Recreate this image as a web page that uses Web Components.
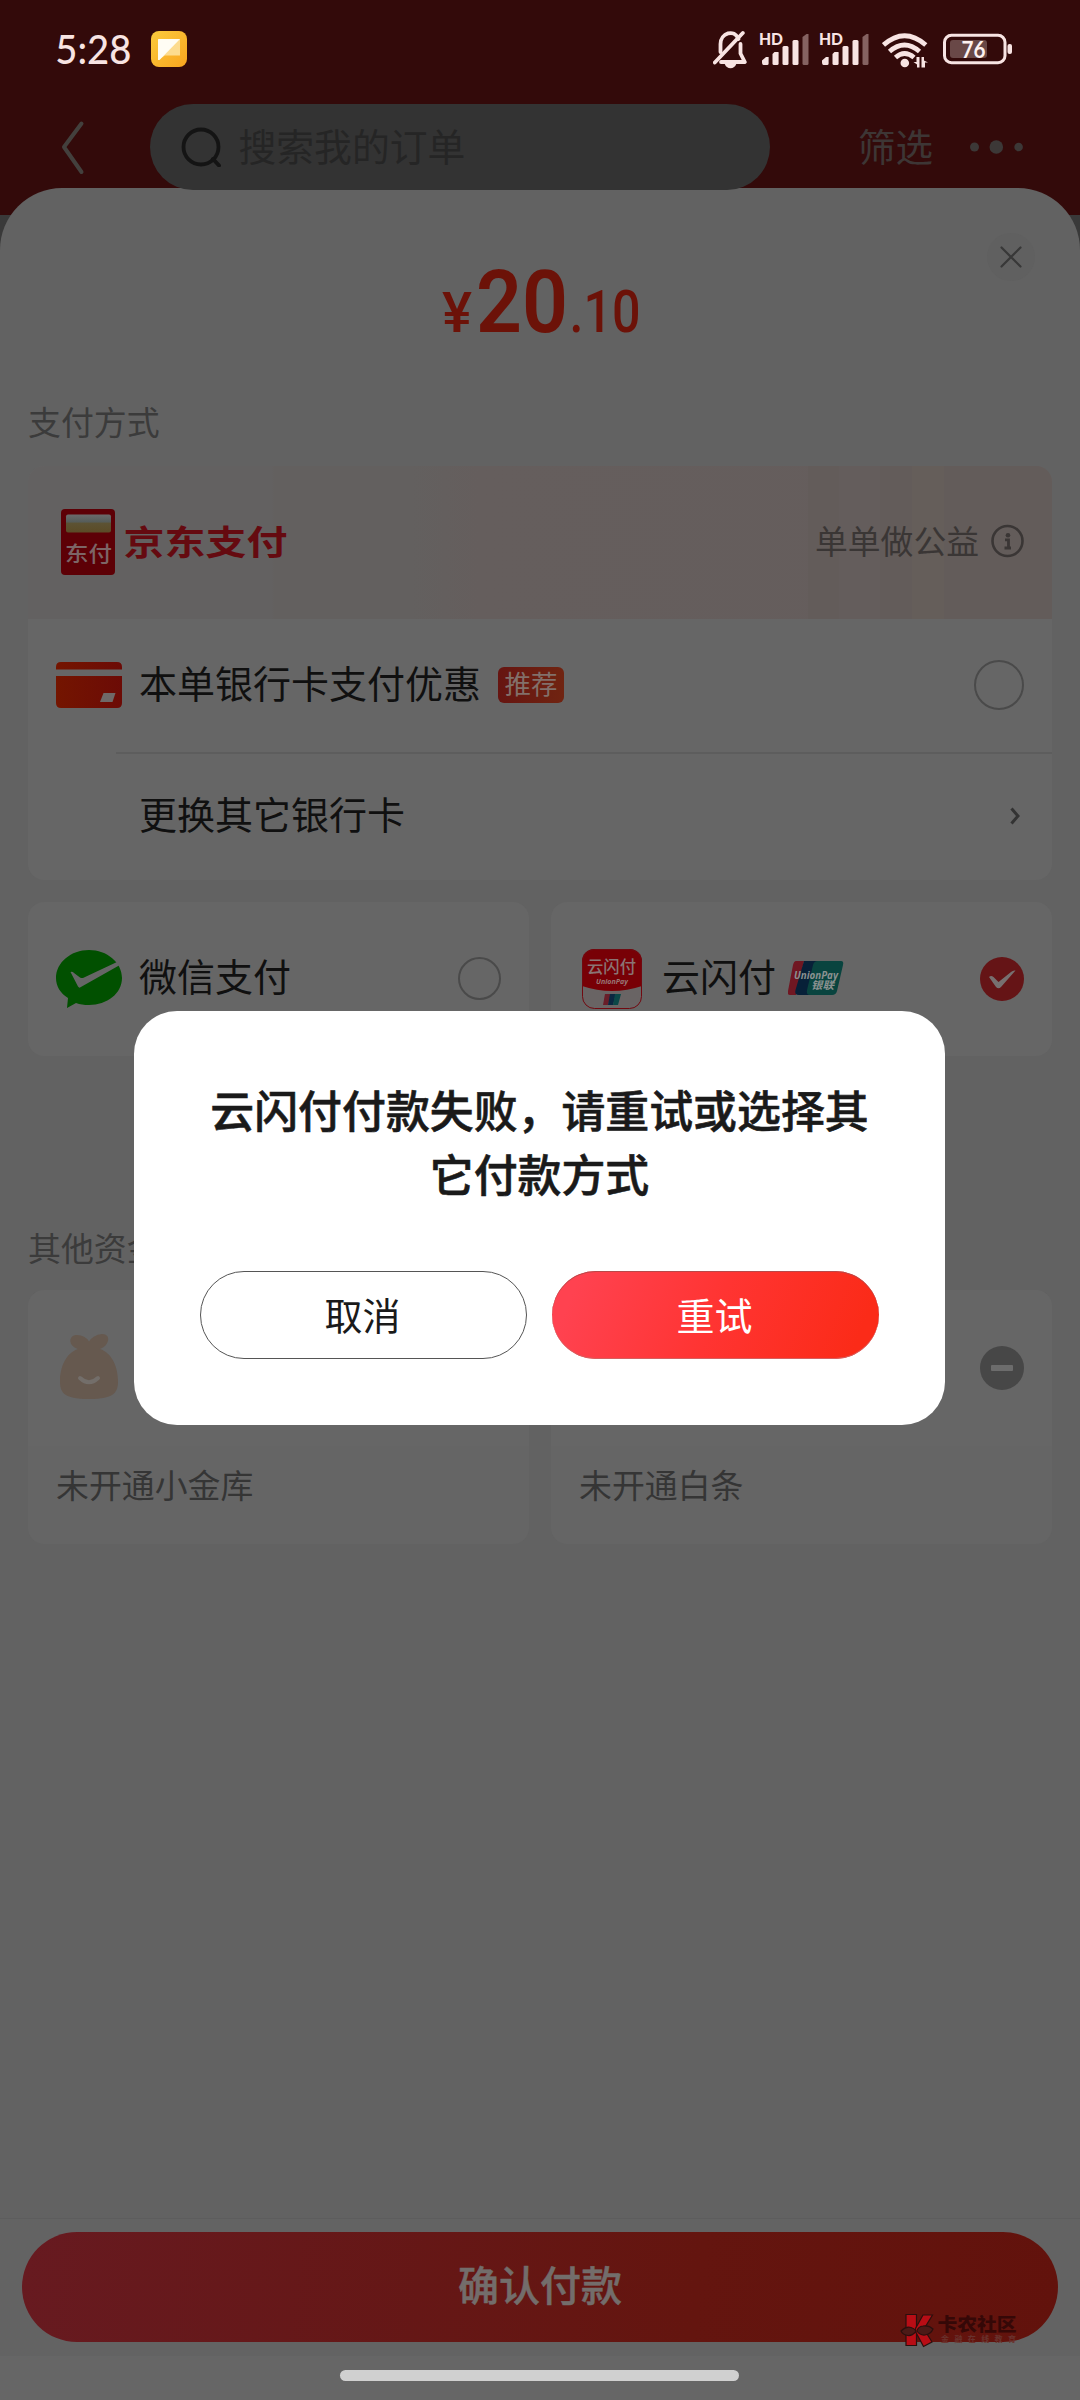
<!DOCTYPE html>
<html lang="zh-CN">
<head>
<meta charset="utf-8">
<title>收银台</title>
<style>
html,body{margin:0;padding:0}
body{width:1080px;height:2400px;overflow:hidden;background:#393939;font-family:"Noto Sans CJK SC",sans-serif}
</style>
</head>
<body>
<pay-screen></pay-screen>
<script>
const define = (name, css, html) => {
  const tpl = document.createElement('template');
  tpl.innerHTML = `<style>*{box-sizing:border-box}svg{display:block;flex:none}${css}</style>${html}`;
  customElements.define(name, class extends HTMLElement {
    constructor() {
      super();
      this.attachShadow({mode: 'open'}).append(tpl.content.cloneNode(true));
    }
  });
};

define('signal-bars', `:host{display:block}`, `
<svg width="53" height="44" viewBox="758 27 53 44">
  <text x="759" y="45.3" font-family="Lato" font-weight="900" font-size="16.500" fill="#f8e4e3" textLength="24" lengthAdjust="spacingAndGlyphs">HD</text>
  <g fill="#f8e4e3"><path d="M762 62v-1.500l4-3.500h2.600v6.500q0 1.500-1.500 1.500h-3.500q-1.600 0-1.600-3z"/><path d="M772.500 54l2-2h3.500q.6 0 .6.6v10.900q0 1.500-1.500 1.500h-3.100q-1.500 0-1.500-1.500z"/>
  <rect x="782.500" y="46" width="6" height="19" rx="1.500"/><rect x="792.500" y="40" width="6" height="25" rx="1.500"/></g>
  <path fill="#856261" d="M802.500 37l4-3h2v29.500q0 1.500-1.500 1.500h-3q-1.500 0-1.500-1.500z"/>
</svg>`);

define('status-bar', `
:host{display:flex;align-items:center;height:98px;padding:0 67px 0 46px}
.gap{flex:1}
.a{margin-right:11px}.b{margin-right:7px}.c{margin-right:11px}.d{margin-right:15px}
`, `
<svg width="106" height="60" viewBox="46 19 106 60"><text x="55.300" y="63.800" font-family="Lato" font-weight="500" font-size="40.500" fill="#f8e4e3" textLength="76" lengthAdjust="spacingAndGlyphs">5:28</text></svg>
<svg width="36" height="36" viewBox="0 0 36 36" style="margin-left:-1px"><defs><linearGradient id="g" x1="0" y1="0" x2="1" y2="1"><stop stop-color="#fbcb3d"/><stop offset="1" stop-color="#f9a51f"/></linearGradient></defs><rect width="36" height="36" rx="8" fill="url(#g)"/><path d="M7 8h22v16.500H14L7 29z" fill="#fddc8e"/><path d="M7.500 8H29L8.500 29H7V8.500z" fill="#fffdf4"/></svg>
<span class="gap"></span>
<svg class="a" width="34" height="44" viewBox="713 27 34 44" fill="none" stroke="#f8e4e3" stroke-width="3.800" stroke-linejoin="round" stroke-linecap="round"><path d="M720.500 52V44c0-11 14-15.500 18-5"/><path d="M740.500 44v9.500l4.300 8.500H721"/><path d="M742.800 33L714.800 62.500"/><path stroke="none" fill="#f8e4e3" d="M724.500 63.500h12q-1.800 4.800-6 4.800t-6-4.800z"/></svg>
<signal-bars class="b"></signal-bars><signal-bars class="c"></signal-bars>
<svg class="d" width="46" height="44" viewBox="882 27 46 44"><g fill="none" stroke="#f8e4e3" stroke-width="4.800"><path d="M883.500 45Q904.500 26.500 925.800 45"/><path d="M889.500 51.500Q904.500 38.500 919.500 51.500"/><path d="M895.500 57.500Q904.500 49.500 914 57.500"/></g><circle cx="904.800" cy="63" r="4.300" fill="#f8e4e3"/><path d="M919.500 57v10.500h-2.500v-3l-3.500-2.500h3V57zM921.500 67.500V57h2.500v3.500l4 2h-3v5z" fill="#f8e4e3"/></svg>
<svg width="70" height="44" viewBox="943 27 70 44"><rect x="944.500" y="35.300" width="60.500" height="27.400" rx="7" fill="none" stroke="#f8e4e3" stroke-width="3"/><rect x="950" y="40" width="37" height="18" rx="3" fill="#694847"/><rect x="1007.500" y="44" width="4.500" height="10" rx="2" fill="#f8e4e3"/><text x="961.500" y="57.800" font-family="Lato" font-weight="700" font-size="23.500" fill="#fdf1f0" textLength="24" lengthAdjust="spacingAndGlyphs">76</text></svg>`);

define('order-header', `
:host{display:block;height:215px;background:#330a0a}
.row{display:flex;align-items:center;height:86px;margin-top:6px;padding:0 56px 0 60px}
.search{display:flex;align-items:center;width:620px;height:86px;margin-left:64px;border-radius:43px;background:#333;padding-left:31px}
.search span{font-size:37.800px;line-height:48px;color:#252525;margin-left:17.500px;padding-bottom:5px}
.filter{font-size:37.500px;line-height:48px;color:#3d3635;margin-left:88px;padding-bottom:5px;width:75px}
.dots{margin-left:35px}
`, `
<status-bar></status-bar>
<div class="row">
  <svg width="26" height="56" viewBox="60 119 26 56"><path d="M81.500 123.500L64 147l17.500 25" fill="none" stroke="#43403d" stroke-width="4" stroke-linecap="round" stroke-linejoin="round"/></svg>
  <div class="search"><svg width="40" height="40" viewBox="181 126 40 40"><circle cx="201" cy="146" r="17.500" fill="none" stroke="#141414" stroke-width="3.800"/><path d="M213 158l6 6.500" stroke="#141414" stroke-width="4" stroke-linecap="round"/></svg><span>搜索我的订单</span></div>
  <span class="filter">筛选</span>
  <svg class="dots" width="56" height="20" viewBox="968 137 56 20" fill="#3c3837"><circle cx="974.500" cy="147" r="4.500"/><circle cx="996.300" cy="147" r="6.800"/><circle cx="1018.600" cy="147" r="4.300"/></svg>
</div>`);

define('price-head', `
:host{display:grid;height:195px;margin:0 -28px}
:host>*{grid-area:1/1}
.close{justify-self:end;margin:44px 44px 0 0}
`, `
<svg width="1080" height="195" viewBox="0 188 1080 195" font-family="Roboto" fill="#6c1208">
  <text x="442" y="332" font-size="56" font-weight="500" textLength="30" lengthAdjust="spacingAndGlyphs">¥</text>
  <text x="476" y="332" font-size="88" font-weight="600" textLength="92" lengthAdjust="spacingAndGlyphs">20</text>
  <text x="569.500" y="332" font-size="60" font-weight="500" textLength="71" lengthAdjust="spacingAndGlyphs">.10</text>
</svg>
<svg class="close" width="50" height="50" viewBox="-25 -25 50 50"><circle r="24" fill="#606060"/><path d="M-9.500-9.500L9.500 9.500M9.500-9.500L-9.500 9.500" stroke="#383838" stroke-width="2.200" stroke-linecap="round"/></svg>`);

define('section-label', `:host{display:block;height:40px;font-size:32.900px;line-height:40px;color:#3b3b3b;white-space:nowrap}`, `<slot></slot>`);

define('pay-radio', `:host{display:block;width:43px;height:43px;border-radius:50%;border:2px solid #4a4a4a;flex:none;margin-bottom:1px}:host([large]){width:50px;height:50px;border-width:2.500px;margin-bottom:2px}`, ``);

define('jd-banner', `
:host{display:flex;align-items:center;height:153px;padding:0 27px 0 32px;background:linear-gradient(90deg,transparent 780px,#635c5a 780px 811px,#645d5c 811px 852px,#635c5a 852px 884px,#655e5a 884px 916px,#635c5a 916px),linear-gradient(90deg,#636161 0 244px,#63605f 246px 385px,#655e5d 450px,#655d5c 100%)}
.note{margin-left:auto;font-size:32.800px;line-height:40px;color:#3a3635;padding-bottom:6px;margin-right:12px}
`, `
<svg width="228" height="68" viewBox="60 509 228 68">
  <defs><linearGradient id="w" x1="0" y1="0" x2="0" y2="1"><stop stop-color="#6b6b6b"/><stop offset=".4" stop-color="#565d5a"/><stop offset=".5" stop-color="#5c5233"/><stop offset="1" stop-color="#5b4b26"/></linearGradient></defs>
  <rect x="61" y="509" width="54" height="66" rx="4" fill="#5d0006"/><rect x="66" y="514.500" width="45" height="18" rx="2" fill="url(#w)"/>
  <text x="65" y="560.500" font-size="21" font-weight="500" fill="#7c6566" textLength="47" lengthAdjust="spacingAndGlyphs">东付</text>
  <text x="123.500" y="554.800" font-size="34.500" font-weight="700" fill="#650a10" textLength="164" lengthAdjust="spacingAndGlyphs">京东支付</text>
</svg>
<span class="note">单单做公益</span>
<svg width="34" height="34" viewBox="0 0 34 34" style="margin-top:-3px"><circle cx="16.500" cy="17" r="15" fill="none" stroke="#3a3635" stroke-width="2.600"/><circle cx="17" cy="11.300" r="2.300" fill="#3a3635"/><path d="M14 15.800h3.500v8M13.500 24h6.500" fill="none" stroke="#3a3635" stroke-width="2.800"/></svg>`);

define('method-row', `
:host{display:flex;align-items:center;height:133px;padding:0 28px}
.icon{width:66px;flex:none;margin-right:17px}
.label{font-size:38px;line-height:48px;color:#101010;padding-bottom:8px;margin-right:auto;display:flex;align-items:center;white-space:nowrap}
`, `<div class="icon"><slot name="icon"></slot></div><div class="label"><slot></slot></div><slot name="end"></slot>`);

define('tag-badge', `:host{display:block;width:66px;height:36px;border-radius:6px;margin:7px 0 0 17px;background:linear-gradient(90deg,#661511,#702411);color:#82706a;font-size:26.500px;line-height:32px;text-align:center}`, `<slot></slot>`);

define('pay-card', `:host{display:block;border-radius:16px;background:#666;overflow:hidden}`, `<slot></slot>`);

define('card-pair', `:host{display:grid;grid-template-columns:501px 501px;justify-content:space-between}`, `<slot></slot>`);

define('fund-card', `
:host{display:block;height:254px;border-radius:16px;background:#656565;overflow:hidden}
.top{display:flex;align-items:center;justify-content:space-between;height:156px;background:#666;padding:0 28px 0 32px}
.foot{font-size:32.900px;line-height:40px;color:#353535;padding:18px 0 0 28px}
`, `<div class="top"><slot name="icon"><span></span></slot><slot name="end"></slot></div><div class="foot"><slot></slot></div>`);

define('forum-mark', `:host{display:block}`, `
<svg width="120" height="38" viewBox="900 2311 120 38">
  <g stroke="#2a100e" stroke-width="1.200"><path d="M906 2314.500h10.500v31H906z" fill="#b80d15"/><path d="M923 2315h9.500l-8.500 14 8 13-8.500 4.500-8-15v-3z" fill="#b80d15"/><path d="M901 2331q5-5 10-3.500 4.500 1.500 5 4-4 4.500-8 4-5-.5-7-4.500z" fill="#4c1a17"/><path d="M917 2331q1-4.500 6-5 6-1 10 3-2 5-8 6-5 .5-8-4z" fill="#4c1a17"/></g>
  <text x="937.500" y="2331" font-size="18.500" font-weight="900" fill="#350807" textLength="79" lengthAdjust="spacingAndGlyphs">卡农社区</text>
  <text x="941" y="2341.600" font-size="8" font-weight="700" fill="#69322e" textLength="75">金融在线教育</text>
</svg>`);

define('confirm-bar', `
:host{display:block;height:182px;margin:auto -28px 0;background:#636363;border-top:1px solid #5d5d5d;position:relative}
.btn{display:block;margin:13px 22px 0;width:1036px;height:110px;border-radius:55px;background:linear-gradient(97deg,#671a20,#64150f 65%,#62120c);text-align:center;font-size:41px;font-weight:500;line-height:102px;color:#736d6b;-webkit-text-stroke:.5px #736d6b}
.home{height:44px;margin-top:14px;background:#666;display:flex;justify-content:center;padding-top:14px}
.home i{width:399px;height:11px;border-radius:5.500px;background:#d0d0d0;margin-right:1px}
forum-mark{position:absolute;left:900px;top:92px}
`, `<div class="btn">确认付款</div><div class="home"><i></i></div><forum-mark></forum-mark>`);

define('alert-dialog', `
:host{position:absolute;left:134px;top:1011px;width:811px;height:414px;border-radius:43px;background:#fff;padding:66px 66px 0}
p{margin:0;font-size:43.900px;line-height:64px;font-weight:500;color:#1a1a1a;text-align:center;-webkit-text-stroke:.6px #1a1a1a}
.actions{display:flex;justify-content:space-between;margin-top:66px}
.actions div{width:327px;height:88px;border-radius:44px;font-size:38px;text-align:center;line-height:83px;color:#1a1a1a;border:1px solid #555;padding-right:2px}
.actions .go{border:0;line-height:85px;color:#fff;background:linear-gradient(112deg,#ff4250 8%,#ff3432 50%,#fb2b18 92%);box-shadow:inset 0 1px #b8494a,inset 0 -1px #d56060}
`, `<p><slot></slot></p><div class="actions"><div>取消</div><div class="go">重试</div></div>`);

define('pay-sheet', `
:host{display:flex;flex-direction:column;height:2212px;margin-top:-27px;border-radius:62px 62px 0 0;background:#626262;padding:0 28px}
.l1{margin-top:18px}.c1{margin-top:25px;height:414px}.c2{margin-top:22px}.c2 pay-card,.c2 method-row{height:154px}
.l2{margin-top:171px}.c3{margin-top:23px}
.change{height:128px;border-top:2px solid transparent;background:linear-gradient(#5d5d5d,#5d5d5d) 88px 0/100% 2px no-repeat border-box;padding-right:31px}
`, `
<price-head></price-head>
<section-label class="l1">支付方式</section-label>
<pay-card class="c1">
  <jd-banner></jd-banner>
  <method-row>
    <svg slot="icon" width="66" height="46" viewBox="0 0 66 46" style="margin-bottom:2px"><defs><linearGradient id="c"><stop stop-color="#741500"/><stop offset="1" stop-color="#6c0b06"/></linearGradient></defs><path d="M5 0h56q5 0 5 5v2.500H0V5q0-5 5-5zM0 14h66v27q0 5-5 5H5q-5 0-5-5z" fill="url(#c)"/><path d="M47.500 31H59.500l-3 9H44z" fill="#6f6968"/></svg>
    本单银行卡支付优惠<tag-badge>推荐</tag-badge>
    <pay-radio slot="end" large></pay-radio>
  </method-row>
  <method-row class="change">更换其它银行卡
    <svg slot="end" width="12" height="20" viewBox="0 0 12 20" style="margin-bottom:3px"><path d="M2.500 2.500L9 10l-6.500 7.500" fill="none" stroke="#333" stroke-width="3"/></svg>
  </method-row>
</pay-card>
<card-pair class="c2">
  <pay-card><method-row>
    <svg slot="icon" width="66" height="58" viewBox="56 951 66 58"><path d="M89 951c18 0 33 12.500 33 28s-15 27-33 27c-5 0-9-.5-13-2l-9 5 1-10c-8-5-12-12-12-20 0-15.500 15-28 33-28z" fill="#015000"/><path d="M70.500 973q2-1 3.500 1l6 4.500q2 1 4 0L117 963l2 3.500-39 22q-1 .5-2-1z" fill="#666"/></svg>
    微信支付<pay-radio slot="end"></pay-radio></method-row></pay-card>
  <pay-card><method-row>
    <svg slot="icon" width="66" height="62" viewBox="579 948 66 62"><defs><clipPath id="k"><rect x="582" y="949" width="60" height="60" rx="12"/></clipPath></defs><g clip-path="url(#k)"><rect x="582" y="949" width="60" height="60" fill="#696464"/><path d="M582 949h60v37q-30 10-60 0z" fill="#780006"/></g><rect x="582.500" y="949.500" width="59" height="59" rx="12" fill="none" stroke="#710910"/>
    <text x="587" y="973" font-size="16.500" font-weight="500" fill="#8a7474" textLength="49" lengthAdjust="spacingAndGlyphs">云闪付</text><text x="596" y="984" font-family="Open Sans" font-size="7.500" font-style="italic" font-weight="700" fill="#997777" textLength="32" lengthAdjust="spacingAndGlyphs">UnionPay</text>
    <path d="M605 994h6l-3 11h-5z" fill="#691e29"/><path d="M610 994h6l-3 11h-5z" fill="#0b2741"/><path d="M615 994h6l-3 11h-5z" fill="#0b4747"/></svg>
    <span>云闪付</span>
    <svg width="56" height="36" viewBox="788 960 56 36" style="margin:6px 0 0 12px"><path d="M796 961h8l-8 34h-6q-3 0-2-4l5-26q1-4 3-4z" fill="#701722"/><path d="M804 961h17l-8 34H799q-5 0-3.500-5z" fill="#072038"/><path d="M818 961h23q3 0 2 4l-6 26q-1 4-5 4H810q-4 0-3-5l6-25q1-4 5-4z" fill="#09443f"/>
    <text x="794" y="978.500" font-family="Open Sans" font-style="italic" font-weight="700" font-size="10.500" fill="#8b9190" textLength="44" lengthAdjust="spacingAndGlyphs">UnionPay</text><text x="811" y="989.300" font-size="10.500" font-style="italic" font-weight="700" fill="#8b9190" textLength="23" lengthAdjust="spacingAndGlyphs">银联</text></svg>
    <svg slot="end" width="44" height="44" viewBox="-22 -22 44 44"><circle r="22" fill="#651416"/><path d="M-13-2q2-2 4.500 0l5 5L9-7q2-2 4.500-1.500L-1 8q-2.500 2.500-5 0z" fill="#777070"/></svg>
  </method-row></pay-card>
</card-pair>
<section-label class="l2">其他资金</section-label>
<card-pair class="c3">
  <fund-card><svg slot="icon" width="60" height="66" viewBox="0 0 60 66" style="margin-top:-2px"><path d="M18 15C8 12 8 1 17 1q8 0 12 6.500Q33 1 42 0c10 0 7 12-2 15 12 4 18 18 18 32 0 11-3 18-29 18S0 58 0 47c0-14 6-28 18-32z" fill="#66594f"/><path d="M20 44q9 8.500 18 0" fill="none" stroke="#736e6a" stroke-width="4" stroke-linecap="round"/></svg>未开通小金库</fund-card>
  <fund-card><svg slot="end" width="44" height="44" viewBox="-22 -22 44 44"><circle r="22" fill="#474747"/><rect x="-11" y="-3" width="22" height="6" rx="1" fill="#6c6c6c"/></svg>未开通白条</fund-card>
</card-pair>
<confirm-bar></confirm-bar>`);

define('pay-screen', `:host{display:block;position:relative;width:1080px;height:2400px}`, `
<order-header></order-header>
<pay-sheet></pay-sheet>
<alert-dialog>云闪付付款失败，请重试或选择其它付款方式</alert-dialog>`);
</script>
</body>
</html>
